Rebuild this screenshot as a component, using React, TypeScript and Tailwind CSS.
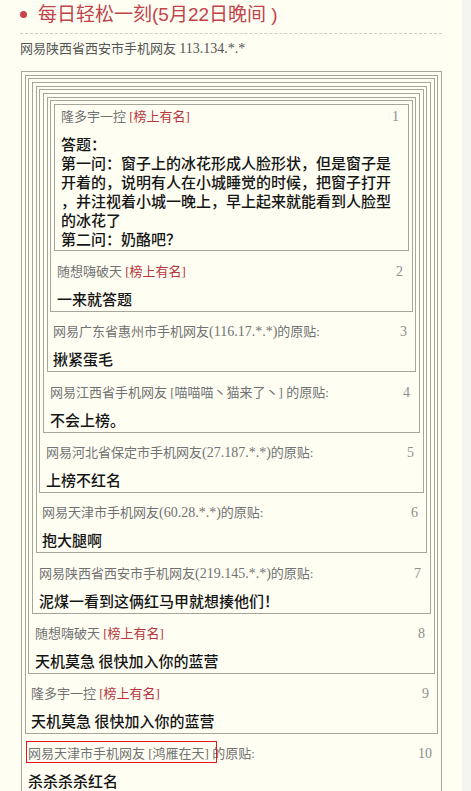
import React from "react";

type FloorData = {
  header: React.ReactNode;
  content: React.ReactNode;
  pad: string;
  gap: string;
  pb: string;
};

const L = ({ children }: { children: React.ReactNode }) => (
  <span className="text-[14px]">{children}</span>
);

const Red = ({ children }: { children: React.ReactNode }) => (
  <span className="text-[#b8343c]">{children}</span>
);

const floors: FloorData[] = [
  {
    header: (
      <>
        隆多宇一控 <Red>[榜上有名]</Red>
      </>
    ),
    content: (
      <>
        <div className="whitespace-nowrap">答题：</div>
        <div className="whitespace-nowrap">第一问：窗子上的冰花形成人脸形状，但是窗子是</div>
        <div className="whitespace-nowrap">开着的，说明有人在小城睡觉的时候，把窗子打开</div>
        <div className="whitespace-nowrap">，并注视着小城一晚上，早上起来就能看到人脸型</div>
        <div className="whitespace-nowrap">的冰花了</div>
        <div className="whitespace-nowrap">第二问：奶酪吧？</div>
      </>
    ),
    pad: "px-[3px] pt-[3px]",
    gap: "",
    pb: "pb-[2px]",
  },
  {
    header: (
      <>
        随想嗨破天 <Red>[榜上有名]</Red>
      </>
    ),
    content: "一来就答题",
    pad: "px-[3px] pt-[3px]",
    gap: "mt-[12px]",
    pb: "pb-[3px]",
  },
  {
    header: (
      <>
        网易广东省惠州市手机网友<L>(116.17.*.*)</L>的原贴:
      </>
    ),
    content: "揪紧蛋毛",
    pad: "px-[2px] pt-[2px]",
    gap: "mt-[11px]",
    pb: "pb-[3px]",
  },
  {
    header: <>网易江西省手机网友 [喵喵喵丶猫来了丶] 的原贴:</>,
    content: "不会上榜。",
    pad: "px-[3px] pt-[3px]",
    gap: "mt-[12px]",
    pb: "pb-[3px]",
  },
  {
    header: (
      <>
        网易河北省保定市手机网友<L>(27.187.*.*)</L>的原贴:
      </>
    ),
    content: "上榜不红名",
    pad: "px-[3px] pt-[3px]",
    gap: "mt-[11px]",
    pb: "pb-[3px]",
  },
  {
    header: (
      <>
        网易天津市手机网友<L>(60.28.*.*)</L>的原贴:
      </>
    ),
    content: "抱大腿啊",
    pad: "px-[2px] pt-[2px]",
    gap: "mt-[11px]",
    pb: "pb-[3px]",
  },
  {
    header: (
      <>
        网易陕西省西安市手机网友<L>(219.145.*.*)</L>的原贴:
      </>
    ),
    content: "泥煤一看到这俩红马甲就想揍他们！",
    pad: "px-[3px] pt-[3px]",
    gap: "mt-[12px]",
    pb: "pb-[3px]",
  },
  {
    header: (
      <>
        随想嗨破天 <Red>[榜上有名]</Red>
      </>
    ),
    content: "天机莫急 很快加入你的蓝营",
    pad: "px-[3px] pt-[3px]",
    gap: "mt-[11px]",
    pb: "pb-[3px]",
  },
  {
    header: (
      <>
        隆多宇一控 <Red>[榜上有名]</Red>
      </>
    ),
    content: "天机莫急 很快加入你的蓝营",
    pad: "px-[2px] pt-[2px]",
    gap: "mt-[11px]",
    pb: "pb-[3px]",
  },
  {
    header: (
      <>
        <span className="relative">
          网易天津市手机网友 [鸿雁在天]
          <span className="pointer-events-none absolute -left-[2px] -right-[8px] -top-[5px] -bottom-[2px] border border-[#e8141a]" />
        </span>{" "}
        的原贴:
      </>
    ),
    content: "杀杀杀杀红名",
    pad: "px-[3px] pt-[3px]",
    gap: "mt-[11px]",
    pb: "pb-[3px]",
  },
];

function Floor({ i }: { i: number }) {
  const f = floors[i];
  return (
    <div className={`border border-[#a6a69c] ${f.pad} ${f.pb}`}>
      {i > 0 && <Floor i={i - 1} />}
      <div
        className={`flex h-[18px] items-center justify-between pl-[3px] pr-[6px] text-[13px] leading-[18px] text-[#727272] ${f.gap}`}
      >
        <span className="whitespace-nowrap">{f.header}</span>
        <span className="text-[14px] text-[#8e8e8e]">{i + 1}</span>
      </div>
      <div className="mt-[8px] px-[3px] text-[15px] font-medium leading-[19px] text-[#151515] font-['Noto_Sans_CJK_SC',sans-serif]">
        {f.content}
      </div>
    </div>
  );
}

export default function App() {
  return (
    <div className="flex h-[791px] w-[471px] overflow-hidden font-['Liberation_Serif','Noto_Sans_CJK_SC',serif]">
      <div className="w-[462px] bg-[#fefef3]">
        <div className="ml-[20px] w-[422px]">
          <div className="flex h-[34px] items-start border-b border-dashed border-[#cfcfc6]">
            <span className="mt-[11px] h-[7px] w-[7px] rounded-full bg-[#c9434b]" />
            <span className="ml-[11px] text-[19px] leading-[30px] text-[#c1434b] font-['Liberation_Sans','Noto_Sans_CJK_SC',sans-serif]">
              每日轻松一刻(5月22日晚间 )
            </span>
          </div>
          <div className="mt-[5px] text-[13px] leading-[20px] text-[#555]">
            网易陕西省西安市手机网友 <L>113.134.*.*</L>
          </div>
          <div className="ml-[1px] mt-[12px]">
            <Floor i={9} />
          </div>
        </div>
      </div>
      <div className="flex-1 bg-[#f4f4f1]" />
    </div>
  );
}
